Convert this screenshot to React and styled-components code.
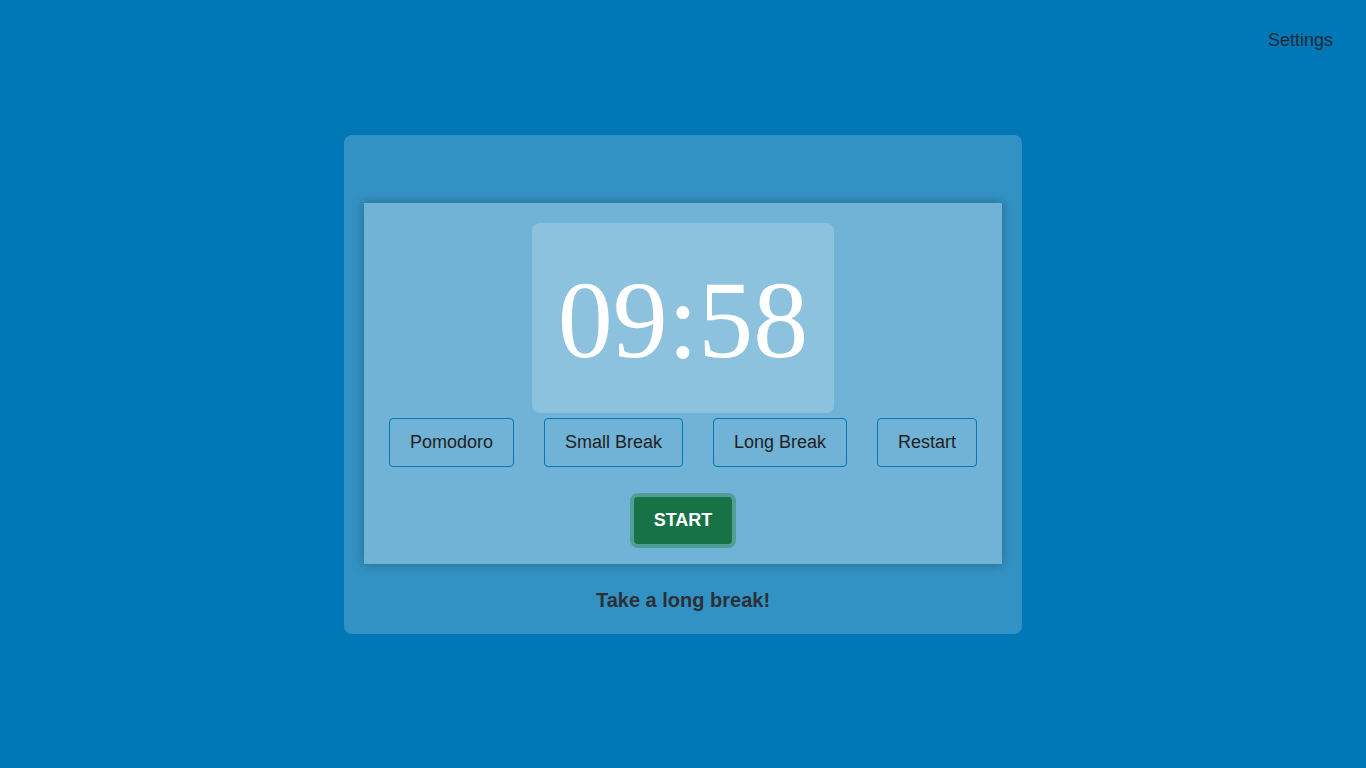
import styled, {createGlobalStyle} from "styled-components";
import {useState} from "react";

const GlobalStyle = createGlobalStyle`
    * {
        box-sizing: border-box;
    }
    body {
        margin: 0;
        background-color: #0077b6;
        font-family: "Liberation Sans", Arial, sans-serif;
    }
`;

const Page = styled.div`
    position: relative;
    min-height: 100vh;
    display: flex;
    align-items: center;
    justify-content: center;
`;

const SettingsLink = styled.button`
    position: absolute;
    top: 30px;
    right: 33px;
    background: none;
    border: 0;
    padding: 0;
    cursor: pointer;
    color: #1f2a35;
    font-family: "Liberation Sans", Arial, sans-serif;
    font-size: 18px;
`;

const Card = styled.div`
    width: 678px;
    height: 499px;
    padding: 68px 20px 0;
    border-radius: 8px;
    background-color: rgba(255, 255, 255, 0.2);
    display: flex;
    flex-direction: column;
    align-items: stretch;
`;

const Panel = styled.div`
    height: 361px;
    padding-top: 20px;
    background-color: rgba(255, 255, 255, 0.3);
    box-shadow: 0 0 10px 1px rgba(0, 0, 0, 0.25);
    display: flex;
    flex-direction: column;
    align-items: center;
`;

const TimerBox = styled.div`
    width: 302px;
    height: 190px;
    border-radius: 8px;
    background-color: rgba(255, 255, 255, 0.2);
    display: flex;
    align-items: center;
    justify-content: center;
    color: #ffffff;
    font-family: Georgia, "Liberation Serif", serif;
    font-variant-numeric: oldstyle-nums;
    font-size: 110px;
    line-height: 1;
    padding-top: 4px;
`;

const ModeRow = styled.div`
    margin-top: 5px;
    display: flex;
    justify-content: center;
`;

const ModeButton = styled.button`
    height: 49px;
    margin: 0 15px;
    padding: 0 20px;
    border: 1px solid #0077b6;
    border-radius: 4px;
    background: transparent;
    color: #222;
    font-family: "Liberation Sans", Arial, sans-serif;
    font-size: 18px;
    cursor: pointer;
`;

const StartButton = styled.button`
    margin-top: 30px;
    width: 98px;
    height: 47px;
    border: 0;
    border-radius: 4px;
    background-color: #177245;
    box-shadow: 0 0 0 4px rgba(46, 139, 87, 0.5);
    color: #ffffff;
    font-family: "Liberation Sans", Arial, sans-serif;
    font-weight: bold;
    font-size: 18px;
    cursor: pointer;
`;

const Message = styled.p`
    margin: 0;
    flex: 1;
    display: flex;
    align-items: center;
    justify-content: center;
    padding-top: 3px;
    color: #2b2f36;
    font-weight: bold;
    font-size: 20px;
`;

export default function App() {
    const [time] = useState("09:58");

    return (
        <>
            <GlobalStyle/>
            <Page>
                <SettingsLink>Settings</SettingsLink>
                <Card>
                    <Panel>
                        <TimerBox>{time}</TimerBox>
                        <ModeRow>
                            <ModeButton>Pomodoro</ModeButton>
                            <ModeButton>Small Break</ModeButton>
                            <ModeButton>Long Break</ModeButton>
                            <ModeButton>Restart</ModeButton>
                        </ModeRow>
                        <StartButton>START</StartButton>
                    </Panel>
                    <Message>Take a long break!</Message>
                </Card>
            </Page>
        </>
    );
}
